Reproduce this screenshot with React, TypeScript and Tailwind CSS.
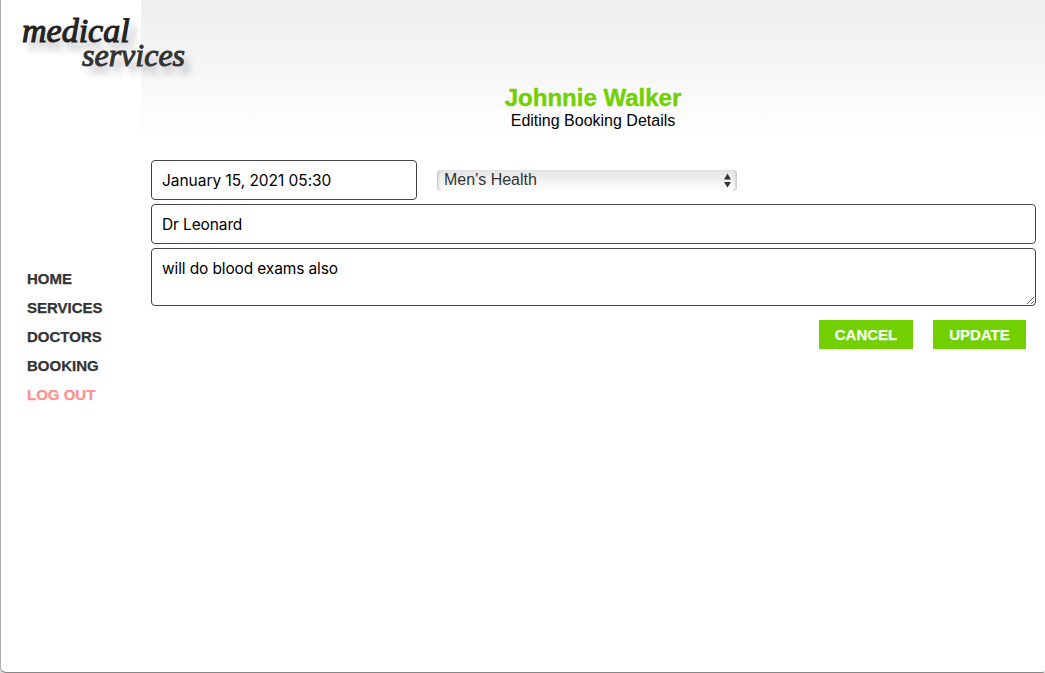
import { useState } from "react";

const links = ["HOME", "SERVICES", "DOCTORS", "BOOKING"];

function Logo() {
  return (
    <div className="relative z-10 h-[100px] w-[220px] pl-[21px] pt-[12px] font-['Liberation_Serif',serif] italic text-[#222] [text-shadow:6px_8px_7px_rgba(0,0,0,0.32)]">
      <div className="h-[26px] whitespace-nowrap text-[34px] leading-[38px] [-webkit-text-stroke:1.1px_#222]">medical</div>
      <div className="h-[26px] whitespace-nowrap pl-[60px] text-[32px] leading-[35px] text-[#333] [-webkit-text-stroke:1px_#333]">services</div>
    </div>
  );
}

function Sidebar() {
  return (
    <aside className="w-[140px] shrink-0">
      <Logo />
      <nav className="flex flex-col pl-[26px] pt-[164px] text-[15px] font-bold leading-[29px] text-[#333] [-webkit-text-stroke:0.25px]">
        {links.map((link) => (
          <a key={link} href="#" className="whitespace-nowrap">
            {link}
          </a>
        ))}
        <a href="#" className="whitespace-nowrap text-[#ff9090]">LOG OUT</a>
      </nav>
    </aside>
  );
}

function CategorySelect() {
  return (
    <button
      type="button"
      className="ml-5 mt-[10px] flex h-[21px] w-[300px] items-center justify-between rounded-[4px] bg-linear-to-b from-[#e4e4e4] to-white pl-[7px] pr-[5px] text-[16px] leading-[20px] text-[#333] shadow-[inset_3px_0_3px_-2px_#bbb,inset_-3px_0_3px_-2px_#bbb]"
    >
      <span className="-mt-px">Men's Health</span>
      <svg width="9" height="15" viewBox="0 0 9 15" fill="#333">
        <path d="M4.5 0.5 8 6.5H1ZM1 9h7l-3.5 5.5Z" />
      </svg>
    </button>
  );
}

export default function App() {
  const [date, setDate] = useState("January 15, 2021 05:30");
  const [doctor, setDoctor] = useState("Dr Leonard");
  const [notes, setNotes] = useState("will do blood exams also");
  return (
    <div className="h-[673px] w-[1045px] overflow-hidden bg-[#ddd] font-['Liberation_Sans',sans-serif]">
      <div className="flex h-full rounded-bl-[6px] rounded-br-[3px] border-b border-l border-b-[#888] border-l-[#aaa] bg-white">
        <Sidebar />
        <main className="min-w-0 flex-1">
          <header className="h-[140px] bg-linear-to-b from-[#eeeeee] to-white pt-[84px] text-center">
            <h1 className="text-[24px] font-bold leading-[27px] text-[#72d000] [-webkit-text-stroke:0.4px]">Johnnie Walker</h1>
            <p className="text-[16px] leading-[19px] text-black">Editing Booking Details</p>
          </header>
          <form className="flex flex-col gap-1 pl-[10px] pr-[9px] pt-[20px] text-[16px] text-black">
            <div className="flex h-[40px] items-start">
              <input
                value={date}
                onChange={(e) => setDate(e.target.value)}
                className="h-[40px] w-[266px] rounded-[4px] border border-[#444] bg-white px-[10px] font-[Inter,sans-serif] text-[15.5px] tracking-[-0.04px] outline-none"
              />
              <CategorySelect />
            </div>
            <input
              value={doctor}
              onChange={(e) => setDoctor(e.target.value)}
              className="h-[40px] w-full rounded-[4px] border border-[#444] bg-white px-[10px] font-[Inter,sans-serif] text-[15.5px] tracking-[-0.12px] outline-none"
            />
            <textarea
              value={notes}
              onChange={(e) => setNotes(e.target.value)}
              className="block h-[58px] w-full resize rounded-[4px] border border-[#444] bg-white px-[10px] py-[10px] font-[Inter,sans-serif] text-[15.5px] leading-[19px] tracking-[-0.13px] outline-none"
            />
            <div className="mt-[10px] flex justify-end gap-5 pr-[10px] text-[15px] font-bold leading-[29px] text-[#f4fff0] [-webkit-text-stroke:0.25px]">
              <button type="button" className="h-[29px] w-[94px] bg-[#72d000]">CANCEL</button>
              <button type="button" className="h-[29px] w-[93px] bg-[#72d000]">UPDATE</button>
            </div>
          </form>
        </main>
      </div>
    </div>
  );
}
